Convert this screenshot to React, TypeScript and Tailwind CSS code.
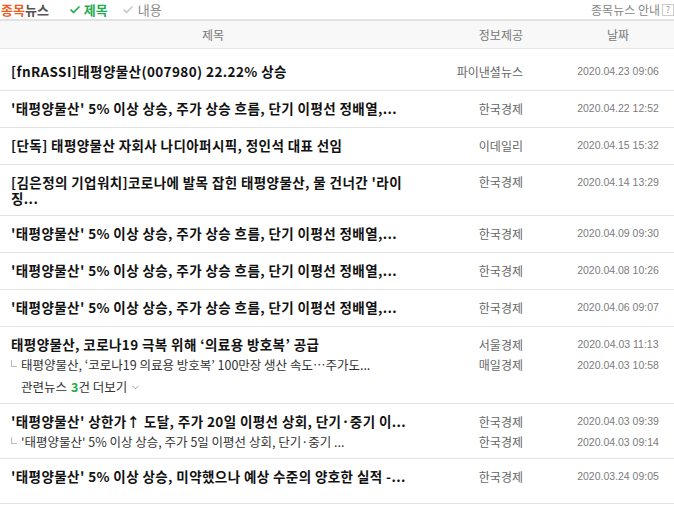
import React from "react";
import { Check, ChevronDown } from "lucide-react";

type Item = {
  title: React.ReactNode;
  provider: string;
  date: string;
  wrap?: boolean;
  sub?: { title: string; provider: string; date: string };
  more?: number;
};

const T2 = "'태평양물산' 5% 이상 상승, 주가 상승 흐름, 단기 이평선 정배열,...";

const items: Item[] = [
  { title: "[fnRASSI]태평양물산(007980) 22.22% 상승", provider: "파이낸셜뉴스", date: "2020.04.23 09:06" },
  { title: T2, provider: "한국경제", date: "2020.04.22 12:52" },
  { title: "[단독] 태평양물산 자회사 나디아퍼시픽, 정인석 대표 선임", provider: "이데일리", date: "2020.04.15 15:32" },
  {
    title: (
      <>
        [김은정의 기업워치]코로나에 발목 잡힌 태평양물산, 물 건너간 '라이
        <br />
        징...
      </>
    ),
    provider: "한국경제",
    date: "2020.04.14 13:29",
    wrap: true,
  },
  { title: T2, provider: "한국경제", date: "2020.04.09 09:30" },
  { title: T2, provider: "한국경제", date: "2020.04.08 10:26" },
  { title: T2, provider: "한국경제", date: "2020.04.06 09:07" },
  {
    title: "태평양물산, 코로나19 극복 위해 ‘의료용 방호복’ 공급",
    provider: "서울경제",
    date: "2020.04.03 11:13",
    sub: {
      title: "태평양물산, ‘코로나19 의료용 방호복’ 100만장 생산 속도…주가도...",
      provider: "매일경제",
      date: "2020.04.03 10:58",
    },
    more: 3,
  },
  {
    title: "'태평양물산' 상한가↑ 도달, 주가 20일 이평선 상회, 단기·중기 이...",
    provider: "한국경제",
    date: "2020.04.03 09:39",
    sub: {
      title: "'태평양물산' 5% 이상 상승, 주가 5일 이평선 상회, 단기·중기 ...",
      provider: "한국경제",
      date: "2020.04.03 09:14",
    },
  },
  { title: "'태평양물산' 5% 이상 상승, 미약했으나 예상 수준의 양호한 실적 -...", provider: "한국경제", date: "2020.03.24 09:05" },
];

const KR = { fontFamily: '"Noto Sans CJK KR", "Noto Sans", sans-serif' };
const DATE = { fontFamily: '"Liberation Sans", Arial, sans-serif' };

function Cols({ children, provider, date, lh }: { children: React.ReactNode; provider: string; date: string; lh: string }) {
  return (
    <div className="flex items-start">
      <div className="min-w-0 flex-1 pl-[11px] pr-[10px] whitespace-nowrap">{children}</div>
      <div className={`w-[120px] shrink-0 pr-[39px] text-right text-[12px] text-[#666] ${lh}`}>{provider}</div>
      <div className={`w-[112px] shrink-0 text-center text-[10.5px] text-[#7c7c7c] ${lh}`} style={DATE}>
        {date}
      </div>
    </div>
  );
}

function Row({ item, last, first }: { item: Item; last?: boolean; first?: boolean }) {
  const pad = first
    ? "pt-[15px] pb-[11px]"
    : last
    ? "pt-[10px] pb-[19px]"
    : item.wrap
    ? "pt-[9px] pb-[9px]"
    : item.sub
    ? "pt-[10px] pb-[8px]"
    : "pt-[10px] pb-[11px]";
  const lh = item.wrap ? "leading-[16px]" : "leading-[15px]";
  return (
    <div className={`border-b border-[#e3e3e3] ${pad}`}>
      <Cols provider={item.provider} date={item.date} lh={lh}>
        <div className={`text-[13.5px] font-bold tracking-[0.4px] text-[#111] ${lh}`}>{item.title}</div>
      </Cols>
      {item.sub && (
        <div className="mt-[5px]">
          <Cols provider={item.sub.provider} date={item.sub.date} lh="leading-4">
            <div className="flex items-center text-[12.5px] leading-4 text-[#333]">
              <span className="mr-[4px] mb-[3px] inline-block h-[7px] w-[6px] shrink-0 border-b border-l border-[#bbb]" />
              <span>{item.sub.title}</span>
            </div>
          </Cols>
        </div>
      )}
      {item.more && (
        <div className="mt-[6px] flex items-center pl-[21px] text-[12.5px] leading-4 text-[#333]">
          <span>관련뉴스 </span>
          <span className="ml-[4px] font-bold text-[#20b04b]">{item.more}</span>
          <span>건 더보기</span>
          <ChevronDown className="ml-[3px] h-[11px] w-[11px] text-[#999]" strokeWidth={2} />
        </div>
      )}
    </div>
  );
}

export default function App() {
  return (
    <div className="h-[512px] w-[674px] overflow-hidden bg-white" style={KR}>
      <div className="flex h-[19px] items-center justify-between">
        <div className="flex items-center text-[13px] leading-none">
          <span className="ml-[1px] font-bold text-[#f25c1f]">종목</span>
          <span className="font-bold text-[#555]">뉴스</span>
          <span className="ml-[20px] flex items-center font-bold text-[#1fae4d]">
            <Check className="mr-[3px] h-[12px] w-[12px]" strokeWidth={3.5} />
            제목
          </span>
          <span className="ml-[14px] flex items-center text-[#888]">
            <Check className="mr-[4px] h-[12px] w-[12px] text-[#c8c8c8]" strokeWidth={3.5} />
            내용
          </span>
        </div>
        <div className="flex items-center text-[12px] leading-none text-[#888]">
          <span>종목뉴스 안내</span>
          <span className="ml-[2px] flex h-[12px] w-[12px] items-center justify-center border border-[#ccc] text-[9px] leading-none text-[#999]">
            ?
          </span>
        </div>
      </div>
      <div className="flex h-[30px] items-center border-t-2 border-b border-t-[#e2e2e2] border-b-[#e6e6e6] bg-[#f8f8f8] text-[12px] text-[#777]">
        <div className="flex-1 pr-[16px] text-center">제목</div>
        <div className="w-[120px] pr-[39px] text-right">정보제공</div>
        <div className="w-[112px] text-center">날짜</div>
      </div>
      <div>
        {items.map((it, i) => (
          <Row key={i} item={it} first={i === 0} last={i === items.length - 1} />
        ))}
      </div>
    </div>
  );
}
